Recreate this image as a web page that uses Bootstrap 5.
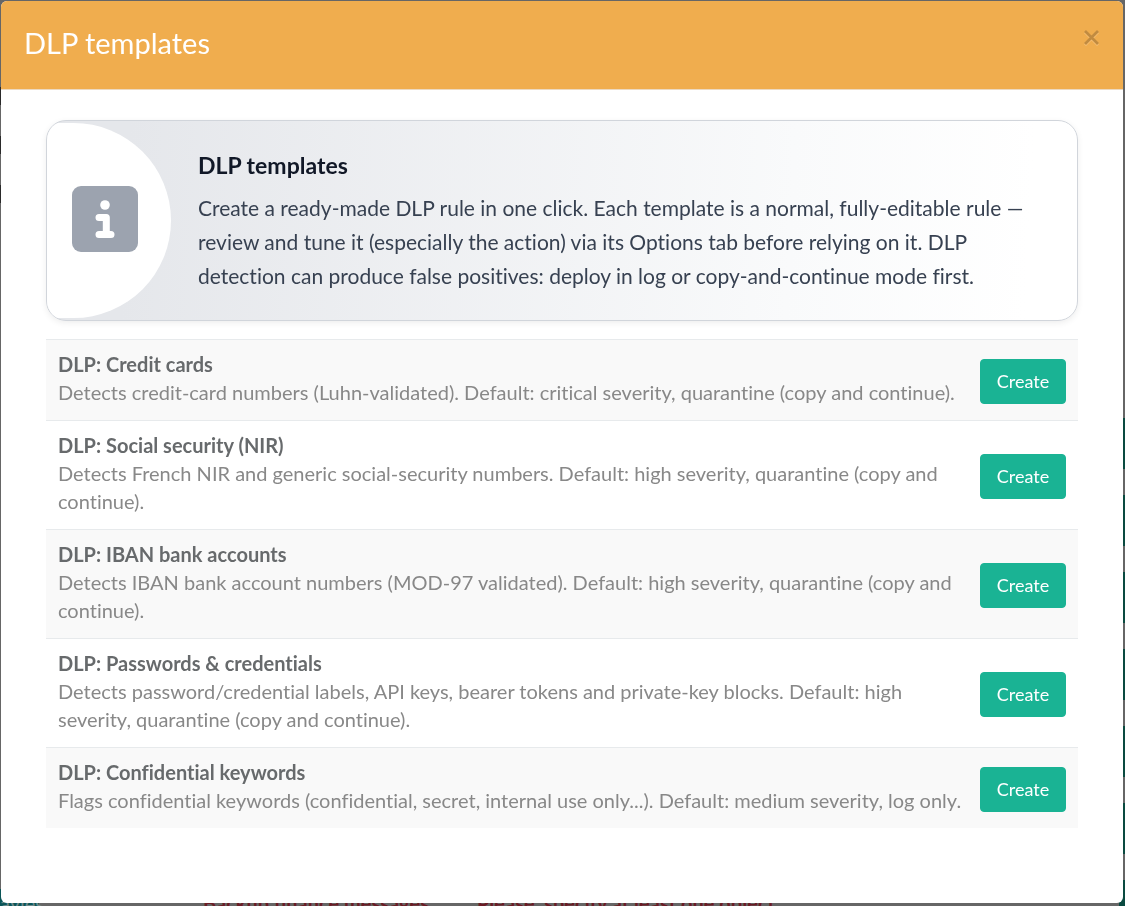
<!DOCTYPE html>
<html lang="en">
<head>
<meta charset="utf-8">
<meta name="viewport" content="width=device-width, initial-scale=1">
<title>DLP templates</title>
<link href="https://cdn.jsdelivr.net/npm/bootstrap@5.3.0/dist/css/bootstrap.min.css" rel="stylesheet">
<style>
body { font-family: Lato, sans-serif; font-variant-ligatures: none; background: #666; color: #676a6c; font-size: 20px; line-height: 28px; }
.page-behind { position: fixed; inset: 0; overflow: hidden; background: #666; color: #6b1c25; }
.row-actions { position: absolute; right: 0; top: 418px; width: 6px; display: grid; gap: 26px; }
.row-actions i { height: 51px; background: #0a4a40; }
.row-icons { position: absolute; left: 0; top: 87px; width: 6px; display: grid; gap: 31px; }
.row-icons i { height: 18px; background: #2a2a2a; }
.status-row { position: absolute; left: 0; right: 0; bottom: -11px; height: 28px; white-space: nowrap; }
.status-row .tag-col { width: 203px; }
.status-row .tag-chip { background: #0b5557; color: #6f8a8b; width: 39px; }
.status-row .name-col { width: 274px; }
.dialog-wrap { position: relative; min-height: 100vh; padding: 1px 2px 3px 1px; }
.dlp-dialog { border-radius: 6px; overflow: hidden; background: #fff; }
.dlp-head { background: #f0ad4e; border-bottom: 1px solid #ecd9c0; padding: 22px 23px; min-height: 89px; }
.dlp-head h1 { font-size: 29px; line-height: 40px; color: #fff; }
.x-btn { background: none; border: 0; padding: 0; width: 17px; line-height: 0; margin-top: 6px; color: #c18b40; }
.dlp-body { padding: 30px 45px 75px; }
.info-card { border: 1px solid #d1d5db; border-radius: 20px; padding: 2px 0; overflow: hidden; background: linear-gradient(93deg, #e5e7eb 8%, #f9fafb 72%, #fff 95%); box-shadow: 0 2px 6px rgba(0,0,0,.07); margin-bottom: 18px; }
.info-side { width: 124px; flex: none; background: #fff; border-radius: 0 100px 100px 0; padding: 0 0 4px 25px; }
.info-text { padding: 25px 28px 25px 27px; }
.info-text h2 { font-size: 23px; line-height: 34px; font-weight: 700; color: #111827; margin-bottom: 9px; }
.info-text p { font-size: 21px; line-height: 34px; color: #374151; }
.dlp-table { color: inherit; }
.dlp-table td { padding: 10px 0 14px 12px; border-top: 1px solid #e7eaec; vertical-align: middle; }
.dlp-table tr:nth-child(odd) td { background: #f9f9f9; }
.dlp-table .desc { color: #888; }
.dlp-table .act { width: 110px; padding: 13px 12px 11px; line-height: 0; }
.btn-create { background: #1ab394; color: #fff; font-size: 18px; line-height: 27px; padding: 8px 0; border-radius: 4px; border: 1px solid #1ab394; width: 86px; }
.btn-create:hover { background: #18a689; color: #fff; }
</style>
</head>
<body>
<div class="page-behind" aria-hidden="true">
  <div class="row-icons"><i></i><i></i><i></i></div>
  <div class="row-actions"><i></i><i></i><i></i><i></i><i></i><i></i><i></i></div>
  <div class="status-row d-flex">
    <div class="tag-col"><div class="tag-chip">ayles</div></div>
    <div class="name-col fw-bold">Backup finance messages</div>
    <div class="fw-bold">Please, specify at least one object</div>
  </div>
</div>
<div class="dialog-wrap d-flex">
  <main class="dlp-dialog flex-fill" role="dialog" aria-labelledby="dlg-title">
    <header class="dlp-head d-flex justify-content-between align-items-start">
      <h1 class="mb-0 fw-normal" id="dlg-title">DLP templates</h1>
      <button type="button" class="x-btn" aria-label="Close"><svg width="17" height="17" viewBox="0 0 17 17" fill="none" stroke-width="2.8"><path d="M2 3l13 13M15 3L2 16" stroke="#f8c27a"/><path d="M2 2l13 13M15 2L2 15" stroke="currentColor"/></svg></button>
    </header>
    <div class="dlp-body">
      <section class="info-card d-flex">
        <div class="info-side d-flex align-items-center">
          <svg width="66" height="66" viewBox="0 0 66 66"><rect width="66" height="66" rx="9" fill="#9ca3af"/><circle cx="33" cy="19" r="4.8" fill="#fff"/><path d="M27 31.500h7.300v17M27 48.500h12" fill="none" stroke="#fff" stroke-width="7" stroke-linecap="round" stroke-linejoin="round"/></svg>
        </div>
        <div class="info-text">
          <h2>DLP templates</h2>
          <p class="mb-0">Create a ready-made DLP rule in one click. Each template is a normal, fully-editable rule — review and tune it (especially the action) via its Options tab before relying on it. DLP detection can produce false positives: deploy in log or copy-and-continue mode first.</p>
        </div>
      </section>
      <table class="dlp-table w-100">
        <tbody>
          <tr><td><strong>DLP: Credit cards</strong><div class="desc">Detects credit-card numbers (Luhn-validated). Default: critical severity, quarantine (copy and continue).</div></td><td class="act"><button type="button" class="btn btn-create">Create</button></td></tr>
          <tr><td><strong>DLP: Social security (NIR)</strong><div class="desc">Detects French NIR and generic social-security numbers. Default: high severity, quarantine (copy and continue).</div></td><td class="act"><button type="button" class="btn btn-create">Create</button></td></tr>
          <tr><td><strong>DLP: IBAN bank accounts</strong><div class="desc">Detects IBAN bank account numbers (MOD-97 validated). Default: high severity, quarantine (copy and continue).</div></td><td class="act"><button type="button" class="btn btn-create">Create</button></td></tr>
          <tr><td><strong>DLP: Passwords &amp; credentials</strong><div class="desc">Detects password/credential labels, API keys, bearer tokens and private-key blocks. Default: high severity, quarantine (copy and continue).</div></td><td class="act"><button type="button" class="btn btn-create">Create</button></td></tr>
          <tr><td><strong>DLP: Confidential keywords</strong><div class="desc">Flags confidential keywords (confidential, secret, internal use only...). Default: medium severity, log only.</div></td><td class="act"><button type="button" class="btn btn-create">Create</button></td></tr>
        </tbody>
      </table>
    </div>
  </main>
</div>
<script src="https://cdn.jsdelivr.net/npm/bootstrap@5.3.0/dist/js/bootstrap.bundle.min.js"></script>
</body>
</html>
